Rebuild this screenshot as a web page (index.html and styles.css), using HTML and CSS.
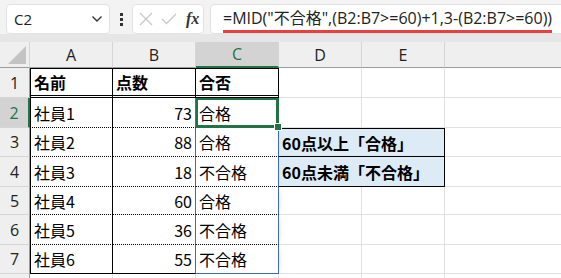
FILE: index.html
```html
<!DOCTYPE html>
<html lang="ja">

<head>
    <meta charset="UTF-8">
    <meta name="viewport" content="width=device-width, initial-scale=1.0">
    <title>MID 合否</title>
    <link rel="stylesheet" href="styles.css">
</head>

<body>
    <div class="toolbar">
        <div class="namebox">
            <span>C2</span>
            <svg class="chevron" width="12" height="8" viewBox="0 0 12 8">
                <path d="M1.5 1.5 L6 6 L10.5 1.5" fill="none" stroke="#333" stroke-width="1.4"/>
            </svg>
        </div>
        <div class="dots">
            <span></span><span></span><span></span>
        </div>
        <div class="fxbox">
            <svg width="14" height="14" viewBox="0 0 14 14">
                <path d="M1 1 L13 13 M13 1 L1 13" stroke="#c8c8c8" stroke-width="1.3"/>
            </svg>
            <svg width="16" height="12" viewBox="0 0 16 12">
                <path d="M1 6 L5.5 10.5 L15 1" fill="none" stroke="#c8c8c8" stroke-width="1.3"/>
            </svg>
            <span class="fx">fx</span>
        </div>
        <div class="formula">
            <span class="formula-text">=MID("不合格",(B2:B7&gt;=60)+1,3-(B2:B7&gt;=60))</span>
        </div>
    </div>
    <div class="band"></div>

    <table class="sheet">
        <colgroup>
            <col class="w-rh">
            <col class="w-col">
            <col class="w-col">
            <col class="w-col">
            <col class="w-col">
            <col class="w-col">
            <col class="w-f">
        </colgroup>
        <tr class="colhead">
            <th class="corner"><span class="tri"></span></th>
            <th>A</th>
            <th>B</th>
            <th class="sel">C</th>
            <th>D</th>
            <th>E</th>
            <th></th>
        </tr>
        <tr class="h30">
            <th class="rh">1</th>
            <td class="t bold tl">名前</td>
            <td class="t bold tm">点数</td>
            <td class="t bold tr">合否</td>
            <td></td>
            <td></td>
            <td></td>
        </tr>
        <tr class="h30">
            <th class="rh rsel">2</th>
            <td class="t ml">社員1</td>
            <td class="t mm num">73</td>
            <td class="t c2">合格<span class="handle"></span></td>
            <td></td>
            <td></td>
            <td></td>
        </tr>
        <tr class="h29">
            <th class="rh">3</th>
            <td class="t ml">社員2</td>
            <td class="t mm num">88</td>
            <td class="t mc">合格</td>
            <td class="note top" colspan="2">60点以上「合格」</td>
            <td></td>
        </tr>
        <tr class="h30">
            <th class="rh">4</th>
            <td class="t ml">社員3</td>
            <td class="t mm num">18</td>
            <td class="t mc">不合格</td>
            <td class="note" colspan="2">60点未満「不合格」</td>
            <td></td>
        </tr>
        <tr class="h28">
            <th class="rh">5</th>
            <td class="t ml">社員4</td>
            <td class="t mm num">60</td>
            <td class="t mc">合格</td>
            <td></td>
            <td></td>
            <td></td>
        </tr>
        <tr class="h30">
            <th class="rh">6</th>
            <td class="t ml">社員5</td>
            <td class="t mm num">36</td>
            <td class="t mc">不合格</td>
            <td></td>
            <td></td>
            <td></td>
        </tr>
        <tr class="h29">
            <th class="rh">7</th>
            <td class="t ml last">社員6</td>
            <td class="t mm num last">55</td>
            <td class="t mc lastc">不合格</td>
            <td></td>
            <td></td>
            <td></td>
        </tr>
        <tr class="h29">
            <th class="rh"></th>
            <td></td>
            <td></td>
            <td></td>
            <td></td>
            <td></td>
            <td></td>
        </tr>
    </table>
</body>

</html>
```

FILE: styles.css
```css
body {
    margin: 0;
    width: 561px;
    height: 278px;
    overflow: hidden;
    background-color: #fff;
    font-family: "Noto Sans CJK JP", "Noto Sans", sans-serif;
    color: #000;
}

/* formula bar */
.toolbar {
    display: flex;
    align-items: center;
    height: 34px;
    padding: 4px 0 0 6px;
    box-sizing: border-box;
    background-color: #f3f3f3;
}

.namebox {
    display: flex;
    align-items: center;
    justify-content: space-between;
    width: 104px;
    height: 30px;
    padding: 0 6px 0 7px;
    box-sizing: border-box;
    background-color: #fff;
    border: 1px solid #e2e2e2;
    border-radius: 4px;
    font-family: "Open Sans", "Noto Sans", sans-serif;
    font-size: 15px;
    color: #222;
}

.dots {
    display: flex;
    flex-direction: column;
    gap: 2px;
    width: 22px;
    align-items: center;
}

.dots span {
    width: 3px;
    height: 3px;
    background-color: #333;
}

.fxbox {
    display: flex;
    align-items: center;
    gap: 8px;
    width: 72px;
    height: 30px;
    padding-left: 6px;
    box-sizing: border-box;
    background-color: #fff;
    border: 1px solid #e2e2e2;
    border-radius: 4px;
}

.fx {
    font-family: "Liberation Serif", serif;
    font-style: italic;
    font-weight: bold;
    font-size: 16px;
    color: #333;
    margin-left: 1px;
}

.formula {
    flex: 1;
    height: 30px;
    margin-left: 6px;
    margin-right: -10px;
    padding-left: 12px;
    box-sizing: border-box;
    background-color: #fff;
    border: 1px solid #e2e2e2;
    border-radius: 4px;
    white-space: nowrap;
    overflow: hidden;
}

.formula-text {
    display: inline-block;
    font-family: "Open Sans", "Noto Sans", "Noto Sans CJK JP", sans-serif;
    font-size: 16px;
    line-height: 23px;
    padding-top: 2px;
    color: #222;
    border-bottom: 3px solid #e8403f;
    letter-spacing: 0;
}

.band {
    height: 8px;
    background-color: #e6e6e6;
}

/* grid */
.sheet {
    table-layout: fixed;
    border-collapse: separate;
    border-spacing: 0;
    width: 565px;
}

.w-rh {
    width: 30px;
}

.w-col {
    width: 83px;
}

.w-f {
    width: 120px;
}

.sheet th,
.sheet td {
    box-sizing: border-box;
    padding: 0;
    border-right: 1px solid #e1e1e1;
    border-bottom: 1px solid #e1e1e1;
    white-space: nowrap;
    overflow: visible;
}

.colhead th {
    height: 26px;
    background-color: #efefef;
    font-family: "Open Sans", "Noto Sans", sans-serif;
    font-weight: normal;
    font-size: 16px;
    color: #222;
    border-right: 1px solid #d5d5d5;
    border-bottom: 1px solid #9b9b9b;
}

.colhead th.sel {
    background-color: #d3d3d3;
    color: #217346;
    border-bottom: 2px solid #217346;
}

.corner {
    position: relative;
}

.tri {
    position: absolute;
    right: 3px;
    bottom: 3px;
    width: 0;
    height: 0;
    border-left: 18px solid transparent;
    border-bottom: 18px solid #c3c3c3;
}

.rh {
    background-color: #efefef;
    font-family: "Open Sans", "Noto Sans", sans-serif;
    font-weight: normal;
    font-size: 16px;
    color: #222;
    border-right: 1px solid #9b9b9b !important;
    border-bottom: 1px solid #d5d5d5 !important;
}

.rh.rsel {
    background-color: #d3d3d3;
    color: #217346;
    border-right: 2px solid #217346 !important;
}

.h30 > * {
    height: 30px;
}

.h29 > * {
    height: 29px;
}

.h28 > * {
    height: 28px;
}

.t {
    font-size: 16px;
    padding: 0 3px !important;
    vertical-align: middle;
}

.bold {
    font-weight: bold;
}

.num {
    text-align: right;
}

/* table borders */
.tl {
    border-left: 1px solid #000;
    border-top: 1px solid #000;
    border-right: 1px solid #000 !important;
    border-bottom: 3px double #000 !important;
}

.tm,
.tr {
    border-top: 1px solid #000;
    border-right: 1px solid #000 !important;
    border-bottom: 3px double #000 !important;
}

.ml {
    border-left: 1px solid #000;
    border-right: 1px solid #000 !important;
    border-bottom: 1px dotted #000 !important;
}

.mm {
    border-right: 1px solid #3b6cc4 !important;
    border-bottom: 1px dotted #000 !important;
}

.mc {
    border-right: 1px solid #3b6cc4 !important;
    border-bottom: 1px dotted #000 !important;
    box-shadow: 4px 0 6px -4px rgba(0, 0, 0, 0.12);
}

.ml.last,
.mm.last {
    border-bottom: 1px solid #000 !important;
}

.mc.lastc {
    border-bottom: 1px solid #3b6cc4 !important;
}

.c2 {
    position: relative;
    border-right: 1px solid #3b6cc4 !important;
    border-bottom: 1px dotted #000 !important;
    box-shadow: inset 0 0 0 2px #217346;
    outline: 1px solid #217346;
    outline-offset: -1px;
}

.handle {
    position: absolute;
    right: -4px;
    bottom: -4px;
    width: 6px;
    height: 6px;
    background-color: #217346;
    border: 1px solid #fff;
}

.note {
    background-color: #ddebf7;
    font-size: 16px;
    font-weight: bold;
    padding: 0 3px !important;
    vertical-align: middle;
    border-right: 1px solid #000 !important;
    border-bottom: 1px solid #000 !important;
}

.note.top {
    border-top: 1px solid #000;
}
```
